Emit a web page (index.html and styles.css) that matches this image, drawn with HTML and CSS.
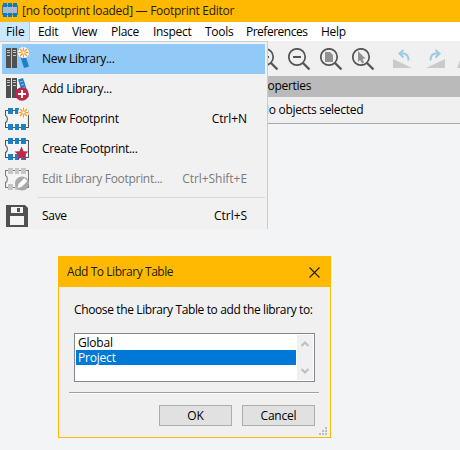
FILE: index.html
```html
<!DOCTYPE html>
<html lang="en">
<head>
<meta charset="utf-8">
<title>Footprint Editor</title>
<link rel="stylesheet" href="styles.css">
</head>
<body>
<svg class="defs" width="0" height="0" aria-hidden="true">
  <defs>
    <g id="books">
      <path fill="#505050" d="M1 1h5v20H1zM7 1h5v20H7z"/>
      <path stroke="#c4c4c4" d="M2 3.500h3M2 5.500h3M2 8.500h3M8 3.500h3M8 5.500h3M8 8.500h3"/>
      <path fill="#2080c4" d="M13 2.500l5-1.500 6 18.500-5 1.500z"/>
      <path stroke="#8cc4e8" d="M15 5l3-1M16 8l3-1M17 11l3-1"/>
    </g>
    <g id="chip">
      <path fill="#f4f4f4" stroke="currentColor" stroke-width="1.100" d="M.5 3.500h23v17H.5v-5c2.500-1 2.500-6 0-7z"/>
    </g>
    <g id="pads"><path d="M3 1h5v6H3zM10 1h4v6h-4zM16 1h5v6h-5zM3 17h5v6H3zM10 17h4v6h-4zM16 17h5v6h-5z"/></g>
    <g id="spark" transform="translate(.5 .5)">
      <circle cx="18" cy="5" r="5.500" fill="#fff"/>
      <path stroke="#ee9a24" stroke-width="1.300" d="M18 0v3M18 7v3M13 5h3M20 5h3M14.500 1.500l2 2M19.500 6.500l2 2M21.500 1.500l-2 2M16.500 6.500l-2 2"/>
      <circle cx="18" cy="5" r="1.700" fill="#fff" stroke="#ee9a24"/>
    </g>
    <g id="lens" fill="none" stroke="#545454">
      <circle cx="9" cy="9" r="8.200" stroke-width="1.700"/>
      <path stroke-width="2.300" d="M15 15l6.500 6.500"/>
    </g>
  </defs>
</svg>
<div class="window">
  <header class="titlebar">
    <svg class="app-icon" width="16" height="14" viewBox="0 0 16 14"><path fill="#a9b9ca" stroke="#56708a" d="M.5 2.500h15v9H.5z"/><path fill="#087bcb" d="M1 0h4v4H1zM6 0h4v4H6zM11 0h4v4h-4zM1 10h4v4H1zM6 10h4v4H6zM11 10h4v4h-4z"/></svg>
    <span class="t-title">[no footprint loaded] — Footprint Editor</span>
  </header>
  <nav class="menubar">
    <span class="m-file">File</span><span>Edit</span><span>View</span><span>Place</span><span>Inspect</span><span>Tools</span><span class="m-prefs">Preferences</span><span>Help</span>
  </nav>
  <div class="toolbar">
    <svg width="23" height="23"><use href="#lens"/><path stroke="#545454" stroke-width="2" d="M5 9h8M9 5v8"/></svg>
    <svg width="23" height="23"><use href="#lens"/><path stroke="#545454" stroke-width="2" d="M5 9h8"/></svg>
    <svg width="23" height="23"><use href="#lens"/><path fill="#929292" d="M5 4h5l3 3v7H5z"/></svg>
    <svg width="23" height="23"><use href="#lens"/><path fill="#929292" d="M6 3l7.500 7.500-3 .5 1.500 3.500-2 1-2-3.500L6 14z"/></svg>
    <i class="divider"></i>
    <svg class="undo" width="20" height="20"><path fill="#cacaca" d="M0 10l19 9H0z"/><path fill="none" stroke="#9ccbe5" stroke-width="2" d="M10.500 1l-4 3.500 4 4M7 4.500h3c4 0 5.500 3 5.500 7"/></svg>
    <svg class="redo" width="20" height="20"><path fill="#cacaca" d="M19 10L0 19h19z"/><path fill="none" stroke="#9ccbe5" stroke-width="2" d="M9.500 1l4 3.500-4 4M13 4.500h-3c-4 0-5.500 3-5.500 7"/></svg>
    <svg class="mirror" width="4" height="20"><path fill="#cacaca" d="M4 9v10H0z"/></svg>
  </div>
  <div class="panel-title"><span>Properties</span></div>
  <div class="panel-info"><span>No objects selected</span></div>
</div>

<div class="menu">
  <div class="item active"><svg width="24" height="24"><use href="#books"/><use href="#spark"/></svg><span>New Library...</span></div>
  <div class="item"><svg width="24" height="24"><use href="#books"/><circle cx="17" cy="17" r="6.800" fill="#bf2748"/><path stroke="#fff" stroke-width="2" d="M13 17h8M17 13v8"/></svg><span>Add Library...</span></div>
  <div class="item"><svg width="24" height="24"><use href="#chip"/><use href="#pads" fill="#1c80c4"/><use href="#spark"/></svg><span class="t-newfp">New Footprint</span><kbd>Ctrl+N</kbd></div>
  <div class="item"><svg width="24" height="24"><use href="#chip"/><use href="#pads" fill="#1c80c4"/><path fill="#bf2748" d="M16.500 9.500l2 4.800 5 .3-3.900 3.300 1.300 5.100-4.400-2.800-4.400 2.800 1.300-5.100-3.900-3.300 5-.3z"/></svg><span>Create Footprint...</span></div>
  <div class="item disabled"><svg width="24" height="24"><use href="#chip"/><use href="#pads" fill="#c6c6c6"/><circle cx="17" cy="16.500" r="7" fill="#a9a9a9"/><path fill="#fff" d="M12.500 21l1-4 6-6 3 3-6 6z"/></svg><span>Edit Library Footprint...</span><kbd>Ctrl+Shift+E</kbd></div>
  <div class="menu-line"></div>
  <div class="item"><svg width="24" height="24"><path fill="#505050" d="M1 1h19l3 3v19H1z"/><path fill="#f4f4f4" d="M6 3h12v6H6zM5 12h14v9H5z"/><path fill="#505050" d="M12 4h3v4h-3z"/></svg><span>Save</span><kbd>Ctrl+S</kbd></div>
</div>

<section class="dialog">
  <header class="dialog-title"><span>Add To Library Table</span><svg width="11" height="11"><path stroke="#241c08" stroke-width="1.100" d="M.5.5l10 10M10.500.5l-10 10"/></svg></header>
  <div class="dialog-body">
    <p>Choose the Library Table to add the library to:</p>
    <div class="list">
      <div class="options"><div>Global</div><div class="selected">Project</div></div>
      <div class="scroll"><svg width="8" height="6"><path d="M.5 5L4 1.500 7.500 5"/></svg><svg width="8" height="6"><path d="M.5 1L4 4.500 7.500 1"/></svg></div>
    </div>
    <div class="rule"></div>
    <div class="buttons"><button>OK</button><button>Cancel</button></div>
  </div>
  <svg class="grip" width="8" height="8"><path fill="#bcbcbc" d="M6 0h2v2H6zM3 3h2v2H3zM6 3h2v2H6zM0 6h2v2H0zM3 6h2v2H3zM6 6h2v2H6z"/></svg>
</section>
</body>
</html>
```
FILE: styles.css
```css
* { box-sizing: border-box; }
body { margin: 0; width: 460px; height: 450px; overflow: hidden; position: relative; background: #f2f4f6; color: #000; font: 12px/16px "Open Sans", "Noto Sans", sans-serif; letter-spacing: -.3px; white-space: nowrap; }
svg { display: block; flex: none; }
.defs { position: absolute; }
.titlebar { height: 22px; background: #ffb900; display: flex; align-items: center; padding-left: 2px; gap: 4px; color: #241c08; }
.t-title { letter-spacing: -.28px; }
.app-icon { margin-top: -3px; }
.menubar { height: 19px; background: #fff; display: grid; grid-template-columns: 30px 34px 39px 42px 52px 41px 75px 1fr; line-height: 19px; }
.menubar span { padding-left: 8px; }
.menubar .m-file { padding-left: 6px; background: #cce8ff; border-right: 1px solid #99d1ff; letter-spacing: -.1px; }
.menubar .m-prefs { letter-spacing: -.5px; }
.toolbar { height: 35px; background: #f0f0f0; display: flex; gap: 9px; padding: 7px 0 0 256px; }
.divider { width: 1px; height: 26px; margin: -2px 0 0 -1px; background: #8c8c8c; }
.undo { margin: 1px 0 0 1px; }
.redo { margin: 1px 0 0 4px; }
.mirror { margin: 1px 0 0 2px; }
.panel-title { height: 21px; background: #bababa; padding: 2px 0 0 256px; }
.panel-info { height: 27px; background: #f0f0f0; border-bottom: 1px solid #a8a8a8; padding: 5px 0 0 260px; }
.menu { position: absolute; left: 0; top: 41px; width: 268px; height: 188px; overflow: hidden; background: #f1f1f1; border-top: 1px solid #ccc; border-right: 1px solid #ccc; padding: 2px 2px 0; }
.item { height: 30px; display: flex; align-items: center; padding: 0 18px 0 3px; gap: 13px; }
.item svg { color: #555; }
.item kbd { margin-left: auto; font: inherit; letter-spacing: -.05px; }
.t-newfp { letter-spacing: -.25px; }
.active { background: #91c9f7; }
.disabled, .disabled svg { color: #7b7b7b; }
.menu-line { height: 1px; margin: 3px 0 3px 36px; background: #d7d7d7; }
.dialog { position: absolute; left: 58px; top: 256px; width: 273px; height: 182px; background: #f0f0f0; border: 1px solid #ffb900; }
.dialog-title { height: 30px; background: #ffb900; display: flex; align-items: center; justify-content: space-between; padding: 0 10px 0 8px; color: #241c08; letter-spacing: -.44px; }
.dialog-body { padding: 15px 15px 0; }
.dialog p { margin: 0 0 15px; letter-spacing: -.38px; }
.list { height: 49px; border: 1px solid #828790; background: #fff; padding: 1px; display: flex; line-height: 15px; }
.options { width: 220px; letter-spacing: -.2px; }
.options div { height: 15px; padding-left: 2px; overflow: hidden; }
.options .selected { background: #0078d7; color: #fff; }
.scroll { width: 16px; margin-left: 1px; background: #f0f0f0; display: flex; flex-direction: column; align-items: center; justify-content: space-between; padding: 6px 0; }
.scroll path { fill: none; stroke: #bfbfbf; stroke-width: 2; }
.rule { height: 2px; margin: 10px -4px 11px -5px; background: #a0a0a0; border-bottom: 1px solid #fff; }
.buttons { display: flex; justify-content: flex-end; gap: 10px; }
button { width: 73px; height: 21px; padding: 0; border: 1px solid #adadad; background: #e1e1e1; color: #000; font: inherit; letter-spacing: -.2px; line-height: 18px; }
.grip { position: absolute; right: 3px; bottom: 2px; }
```
